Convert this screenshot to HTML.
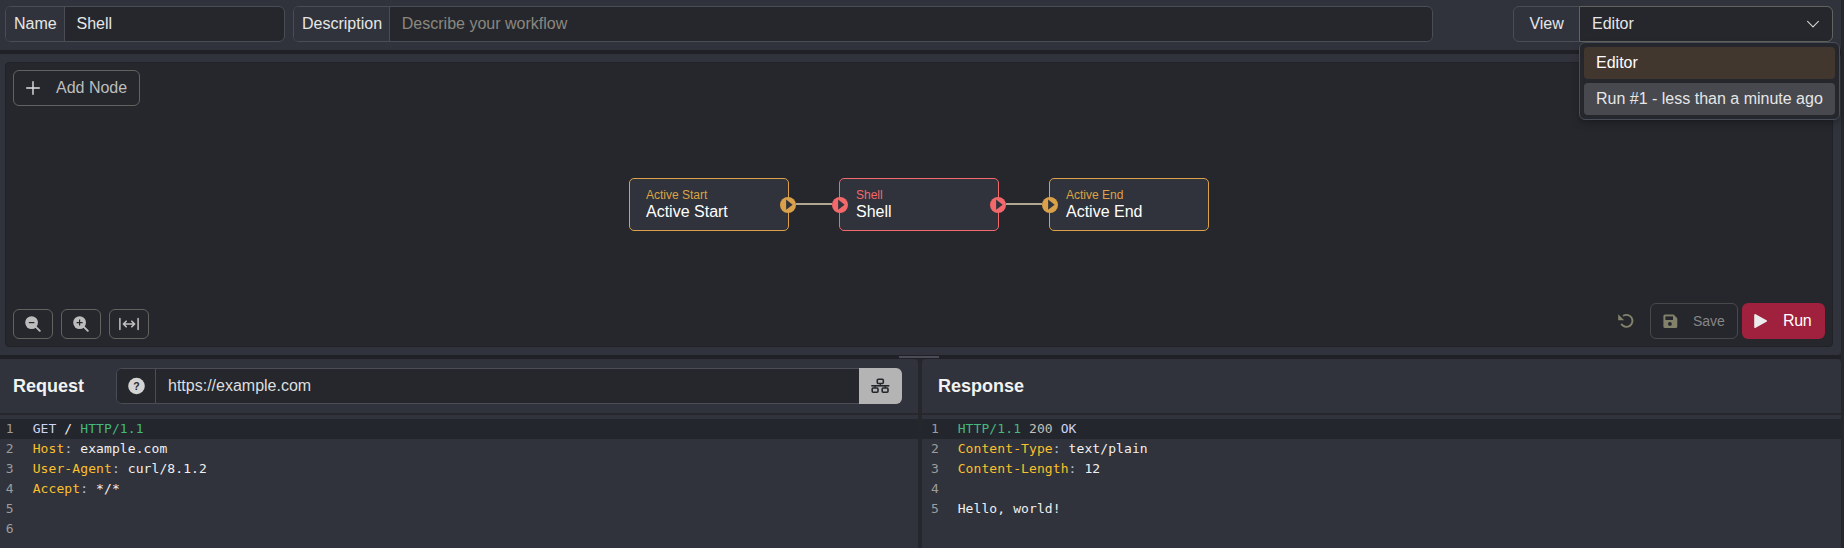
<!DOCTYPE html>
<html lang="en">
<head>
<meta charset="utf-8">
<title>Workflow</title>
<style>
*{box-sizing:border-box;margin:0;padding:0}
html,body{width:1844px;height:548px;overflow:hidden;background:#25272d}
body{position:relative;font-family:"Liberation Sans",Arial,sans-serif;font-size:16px;color:#e6e6e6}
.abs{position:absolute}
.panel{position:absolute;background:#30333b}
.gut{position:absolute;left:0;width:1841px;height:4px;background:#1f2126}
.grp{position:absolute;height:36px;border:1px solid #4a4c56;border-radius:6px;background:#25272d;overflow:hidden}
.addon{position:absolute;left:0;top:0;height:34px;background:#30333b;border-right:1px solid #4a4c56}
.tx{position:absolute;white-space:nowrap;line-height:18px}
.ph{color:#8b877f}
.btn{position:absolute;border:1px solid #62625f;border-radius:6px}
.node{position:absolute;width:160px;height:53px;top:178px;border:1px solid #daa04a;border-radius:5px;background:#30333b}
.node .t1{position:absolute;left:16px;top:9px;font-size:12px;line-height:14px;color:#dfa244;white-space:nowrap}
.node .t2{position:absolute;left:16px;top:23px;font-size:16px;line-height:19px;color:#fff;white-space:nowrap}
.node.red{border-color:#f3686b}
.node.red .t1{color:#f3686b}
.hd{position:absolute;width:16px;height:16px;top:197px}
.edge{position:absolute;height:2px;top:203px;background:#b1a690}
.code,.ln{position:absolute;font-family:"DejaVu Sans Mono","Liberation Mono",monospace;font-size:13px;line-height:20px;white-space:pre;letter-spacing:0.093px}
.code{color:#f0f0f0}
.ln{color:#9c9c9c;text-align:right}
.g{color:#45b97c}.o{color:#fac02e}.l{color:#cfd3f5}.c{color:#b4c0dc}.n{color:#c4c0b6}
.h2{position:absolute;font-weight:bold;font-size:18px;line-height:22px;color:#f2f2f2;white-space:nowrap}
</style>
</head>
<body>

<!-- gutters -->
<div class="gut" style="top:50px"></div>
<div class="gut" style="top:355px"></div>

<!-- top bar -->
<div class="panel" style="left:0;top:0;width:1841px;height:50px;border-radius:0 0 4px 0"></div>
<div class="grp" style="left:5px;top:6px;width:280px">
  <div class="addon" style="width:59px"></div>
  <div class="tx" style="left:8px;top:8px">Name</div>
  <div class="tx" style="left:70.5px;top:8px">Shell</div>
</div>
<div class="grp" style="left:293px;top:6px;width:1140px">
  <div class="addon" style="width:96px"></div>
  <div class="tx" style="left:8px;top:8px">Description</div>
  <div class="tx ph" style="left:107.8px;top:8px">Describe your workflow</div>
</div>
<div class="grp" style="left:1513px;top:6px;width:320px;background:#30333b">
  <div class="tx" style="left:15.4px;top:8px">View</div>
</div>
<div class="abs" style="left:1579px;top:6px;width:254px;height:36px;border:1px solid #62625f;border-radius:0 6px 6px 0;background:#25272d">
  <div class="tx" style="left:12px;top:8px">Editor</div>
  <svg class="abs" style="left:226px;top:10px" width="14" height="14" viewBox="0 0 14 14"><path d="M1.6 4.4 L7 9.8 L12.4 4.4" fill="none" stroke="#d9d6d0" stroke-width="1.1" stroke-linecap="round" stroke-linejoin="round"/></svg>
</div>

<!-- canvas panel -->
<div class="panel" style="left:0;top:54px;width:1841px;height:301px;border-radius:0 4px 4px 0"></div>
<div class="abs" style="left:5px;top:62px;width:1828px;height:285px;background:#25272d;border-radius:4px;border:1px solid #202227"></div>

<div class="btn" style="left:13px;top:70px;width:127px;height:36px;border-color:#62625f;color:#bebebe">
  <svg class="abs" style="left:12px;top:10px" width="14" height="14" viewBox="0 0 14 14"><path d="M7 0.7V13.3M0.7 7H13.3" stroke="#e2e2e2" stroke-width="1.4" stroke-linecap="round" fill="none"/></svg>
  <div class="tx" style="left:42px;top:8px">Add Node</div>
</div>

<!-- nodes -->
<div class="edge" style="left:796px;width:36px"></div>
<div class="edge" style="left:1006px;width:36px"></div>
<div class="node" style="left:629px"><div class="t1">Active Start</div><div class="t2">Active Start</div></div>
<div class="node red" style="left:839px"><div class="t1">Shell</div><div class="t2">Shell</div></div>
<div class="node" style="left:1049px"><div class="t1">Active End</div><div class="t2">Active End</div></div>

<svg class="hd" style="left:780px" viewBox="0 0 16 16"><circle cx="8" cy="8" r="8" fill="#daa04a"/><path d="M6.1 2.6 L12.6 7.7 L6.1 12.8 Z" fill="#30333b"/></svg>
<svg class="hd" style="left:832px" viewBox="0 0 16 16"><circle cx="8" cy="8" r="8" fill="#f3686b"/><path d="M6.1 2.6 L12.6 7.7 L6.1 12.8 Z" fill="#30333b"/></svg>
<svg class="hd" style="left:990px" viewBox="0 0 16 16"><circle cx="8" cy="8" r="8" fill="#f3686b"/><path d="M6.1 2.6 L12.6 7.7 L6.1 12.8 Z" fill="#30333b"/></svg>
<svg class="hd" style="left:1042px" viewBox="0 0 16 16"><circle cx="8" cy="8" r="8" fill="#daa04a"/><path d="M6.1 2.6 L12.6 7.7 L6.1 12.8 Z" fill="#30333b"/></svg>

<!-- zoom buttons -->
<div class="btn" style="left:13px;top:309px;width:40px;height:30px">
  <svg class="abs" style="left:11px;top:6px" width="16" height="16" viewBox="0 0 16 16"><circle cx="6.6" cy="6.6" r="6.4" fill="#bdbdbd"/><path d="M10.6 10.6 L14.8 14.8" stroke="#bdbdbd" stroke-width="1.9" stroke-linecap="round"/><path d="M3.8 6.6H9.4" stroke="#25272d" stroke-width="1.2"/></svg>
</div>
<div class="btn" style="left:61px;top:309px;width:40px;height:30px">
  <svg class="abs" style="left:11px;top:6px" width="16" height="16" viewBox="0 0 16 16"><circle cx="6.6" cy="6.6" r="6.4" fill="#bdbdbd"/><path d="M10.6 10.6 L14.8 14.8" stroke="#bdbdbd" stroke-width="1.9" stroke-linecap="round"/><path d="M3.6 6.6H9.6M6.6 3.6V9.6" stroke="#25272d" stroke-width="1.2"/></svg>
</div>
<div class="btn" style="left:109px;top:309px;width:40px;height:30px">
  <svg class="abs" style="left:9px;top:6px" width="20" height="16" viewBox="0 0 20 16"><path d="M0.9 2.4V13.6M19.1 2.4V13.6" stroke="#c2c2c2" stroke-width="1.5" stroke-linecap="round"/><path d="M4.4 8H15.6M7.2 5.2L4.4 8L7.2 10.8M12.8 5.2L15.6 8L12.8 10.8" stroke="#c2c2c2" stroke-width="1.6" fill="none" stroke-linecap="round" stroke-linejoin="round"/></svg>
</div>

<!-- undo / save / run -->
<svg class="abs" style="left:1618px;top:312px" width="16" height="18" viewBox="0 0 16 18"><path d="M5.7 3.5 A6 6 0 1 1 3.6 12.4" fill="none" stroke="#82816a" stroke-width="1.9" stroke-linecap="round"/><path d="M0.2 2.3 L6.2 8.2 H0.2 Z" fill="#82816a"/></svg>
<div class="btn" style="left:1650px;top:303px;width:88px;height:36px;border-color:#49494b;color:#868686;font-size:14px">
  <svg class="abs" style="left:12px;top:10px" width="15" height="15" viewBox="0 0 15 15"><path d="M2 0.5H10.6L14.3 4.2V12.5A1.6 1.6 0 0 1 12.7 14.1H2A1.6 1.6 0 0 1 .4 12.5V2.1A1.6 1.6 0 0 1 2 .5Z" fill="#82816a"/><rect x="2.4" y="2.4" width="7.6" height="3.6" fill="#25272d"/><circle cx="6.9" cy="9.9" r="1.9" fill="#25272d"/></svg>
  <div class="tx" style="left:42px;top:9.4px;line-height:16px">Save</div>
</div>
<div class="btn" style="left:1742px;top:303px;width:83px;height:36px;border:0;background:#a0213e;color:#fff">
  <svg class="abs" style="left:12px;top:10px" width="14" height="16" viewBox="0 0 14 16"><path d="M1.2 2 L12 8 L1.2 14 Z" fill="#ececec" stroke="#ececec" stroke-width="2" stroke-linejoin="round"/></svg>
  <div class="tx" style="left:41px;top:8.9px;letter-spacing:-0.3px">Run</div>
</div>

<!-- dropdown overlay -->
<div class="abs" style="left:1579px;top:42px;width:261px;height:78px;background:#25272d;border:1px solid #494d59;border-radius:6px;box-shadow:0 4px 8px -1px rgba(0,0,0,.22),0 2px 4px -2px rgba(0,0,0,.2)">
  <div class="abs" style="left:4px;top:4px;width:251px;height:32px;background:#41372f;border-radius:4px;color:#fff"><div class="tx" style="left:12px;top:7px">Editor</div></div>
  <div class="abs" style="left:4px;top:40px;width:251px;height:32px;background:#47494f;border-radius:4px;color:#e6e6e6"><div class="tx" style="left:12px;top:7px">Run #1 - less than a minute ago</div></div>
</div>

<!-- splitter handle -->
<div class="abs" style="left:899px;top:356px;width:40px;height:2px;background:#4a4d57"></div>

<!-- request panel -->
<div class="panel" style="left:0;top:359px;width:918px;height:189px;border-radius:0 4px 0 0"></div>
<div class="abs" style="left:0;top:413px;width:918px;height:2px;background:#26282e"></div>
<div class="h2" style="left:13px;top:375px">Request</div>
<div class="grp" style="left:116px;top:368px;width:786px">
  <div class="addon" style="width:39px;background:#25272d"></div>
  <div class="tx" style="left:51px;top:8px;color:#dedede">https://example.com</div>
</div>
<svg class="abs" style="left:127px;top:377px" width="19" height="18" viewBox="0 0 19 18"><circle cx="9.5" cy="9" r="8.3" fill="#d4d4d4"/><text x="9.5" y="12.7" text-anchor="middle" font-family="Liberation Sans,Arial,sans-serif" font-weight="bold" font-size="10.5" fill="#25272d">?</text></svg>
<div class="abs" style="left:859px;top:368px;width:43px;height:36px;background:#b4b4b4;border-radius:0 6px 6px 0">
  <svg class="abs" style="left:12px;top:10px" width="19" height="16" viewBox="0 0 19 16"><g fill="none" stroke="#25272d" stroke-width="1.6"><rect x="6.3" y="1.3" width="6" height="4.2" rx=".9"/><rect x="1.2" y="10" width="5.8" height="4.2" rx=".9"/><rect x="11.2" y="10" width="5.8" height="4.2" rx=".9"/><path d="M0.3 7.8H18.3"/><path d="M9.3 5.5V7.8M4.1 7.8V10M14.1 7.8V10" stroke-width="1.2"/></g></svg>
</div>
<div class="abs" style="left:0;top:419px;width:918px;height:20px;background:#24262d"></div>
<div class="ln" style="left:0;top:419px;width:13.6px">1
2
3
4
5
6</div>
<div class="code" style="left:32.7px;top:419px"><span class="l">GET</span> / <span class="g">HTTP/1.1</span>
<span class="o">Host</span><span class="c">:</span> example.com
<span class="o">User-Agent</span><span class="c">:</span> curl/8.1.2
<span class="o">Accept</span><span class="c">:</span> */*</div>

<!-- response panel -->
<div class="panel" style="left:922px;top:359px;width:919px;height:189px;border-radius:4px 4px 0 0"></div>
<div class="abs" style="left:922px;top:413px;width:919px;height:2px;background:#26282e"></div>
<div class="h2" style="left:938px;top:375px">Response</div>
<div class="abs" style="left:922px;top:419px;width:919px;height:20px;background:#24262d"></div>
<div class="ln" style="left:922px;top:419px;width:16.8px">1
2
3
4
5</div>
<div class="code" style="left:957.7px;top:419px"><span class="g">HTTP/1.1</span> <span class="n">200</span> <span class="l">OK</span>
<span class="o">Content-Type</span><span class="c">:</span> text/plain
<span class="o">Content-Length</span><span class="c">:</span> 12

Hello, world!</div>

</body>
</html>
